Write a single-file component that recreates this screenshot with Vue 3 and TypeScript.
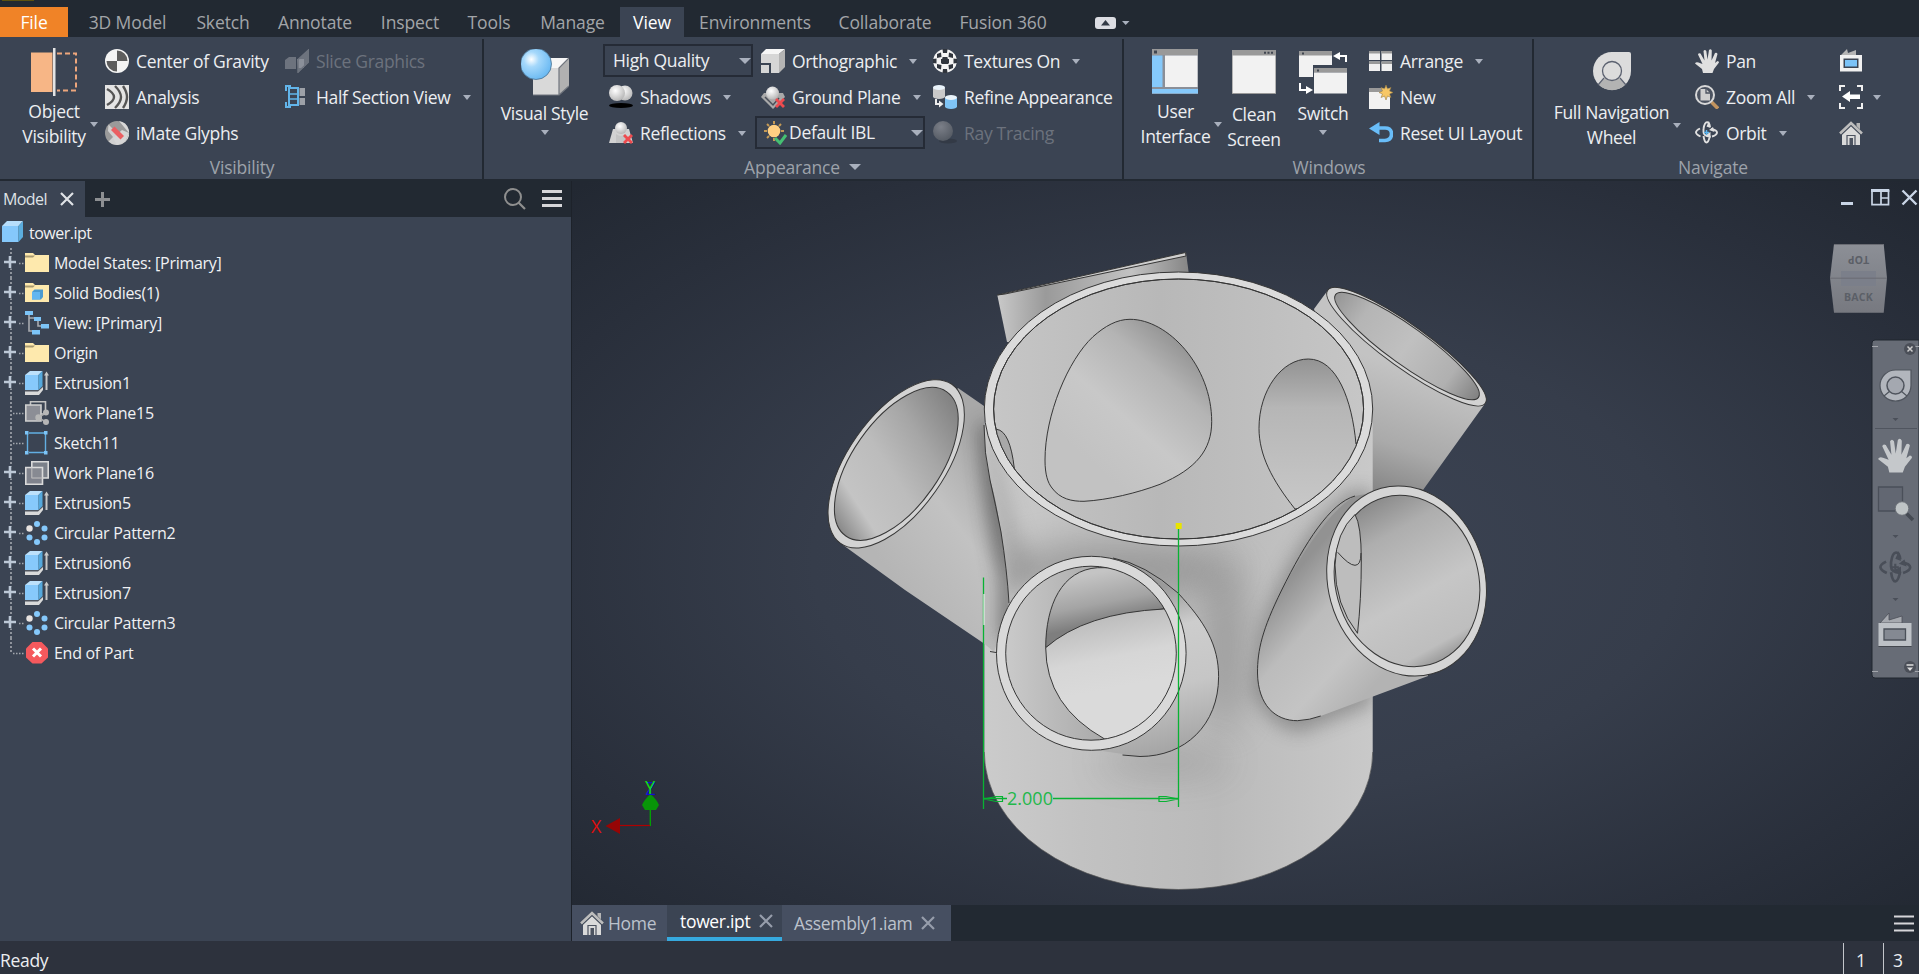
<script setup lang="ts">
interface Cmd { icon: string; label: string; caret?: boolean; off?: boolean }
interface Node { icon: string; label: string; plus: boolean }

const tabs: { label: string; width: number }[] = [
  { label: '3D Model', width: 111 },
  { label: 'Sketch', width: 80 },
  { label: 'Annotate', width: 104 },
  { label: 'Inspect', width: 86 },
  { label: 'Tools', width: 72 },
  { label: 'Manage', width: 95 },
  { label: 'View', width: 64 },
  { label: 'Environments', width: 142 },
  { label: 'Collaborate', width: 118 },
  { label: 'Fusion 360', width: 118 },
]

const visibilityA: Cmd[] = [
  { icon: 'gravity', label: 'Center of Gravity' },
  { icon: 'analysis', label: 'Analysis' },
  { icon: 'imate', label: 'iMate Glyphs' },
]
const visibilityB: Cmd[] = [
  { icon: 'slice', label: 'Slice Graphics', off: true },
  { icon: 'section', label: 'Half Section View', caret: true },
]
const shading: Cmd[] = [
  { icon: 'shadows', label: 'Shadows', caret: true },
  { icon: 'reflect', label: 'Reflections', caret: true },
]
const projection: Cmd[] = [
  { icon: 'ortho', label: 'Orthographic', caret: true },
  { icon: 'ground', label: 'Ground Plane', caret: true },
]
const textures: Cmd[] = [
  { icon: 'texture', label: 'Textures On', caret: true },
  { icon: 'refine', label: 'Refine Appearance' },
  { icon: 'ray', label: 'Ray Tracing', off: true },
]
const windowsCmds: Cmd[] = [
  { icon: 'arrange', label: 'Arrange', caret: true },
  { icon: 'new', label: 'New' },
  { icon: 'reset', label: 'Reset UI Layout' },
]
const navCmds: Cmd[] = [
  { icon: 'hand', label: 'Pan' },
  { icon: 'zoomall', label: 'Zoom All', caret: true },
  { icon: 'orbit', label: 'Orbit', caret: true },
]
const navIcons: Cmd[] = [
  { icon: 'camera', label: '' },
  { icon: 'previous', label: '', caret: true },
  { icon: 'home', label: '' },
]

const nodes: Node[] = [
  { icon: 'folder', label: 'Model States: [Primary]', plus: true },
  { icon: 'bodies', label: 'Solid Bodies(1)', plus: true },
  { icon: 'views', label: 'View: [Primary]', plus: true },
  { icon: 'folder', label: 'Origin', plus: true },
  { icon: 'extrude', label: 'Extrusion1', plus: true },
  { icon: 'planeshare', label: 'Work Plane15', plus: false },
  { icon: 'sketch', label: 'Sketch11', plus: false },
  { icon: 'plane', label: 'Work Plane16', plus: true },
  { icon: 'extrude', label: 'Extrusion5', plus: true },
  { icon: 'pattern', label: 'Circular Pattern2', plus: true },
  { icon: 'extrude', label: 'Extrusion6', plus: true },
  { icon: 'extrude', label: 'Extrusion7', plus: true },
  { icon: 'pattern', label: 'Circular Pattern3', plus: true },
  { icon: 'end', label: 'End of Part', plus: false },
]
</script>

<template>
  <div class="app">
    <svg class="defs" width="0" height="0" aria-hidden="true">
      <defs>
        <radialGradient id="gBlue" cx=".35" cy=".35" r=".7"><stop offset="0" stop-color="#fff" /><stop offset=".35" stop-color="#a5d8fb" /><stop offset="1" stop-color="#68b8f2" /></radialGradient>
        <radialGradient id="gBall" cx=".4" cy=".35" r=".7"><stop offset="0" stop-color="#fff" /><stop offset="1" stop-color="#b4b4b4" /></radialGradient>
        <radialGradient id="gDim" cx=".4" cy=".3" r=".8"><stop offset="0" stop-color="#7b7f88" /><stop offset="1" stop-color="#50565f" /></radialGradient>
      </defs>
      <symbol id="gravity" viewBox="0 0 24 24"><circle cx="12" cy="12" r="12" fill="#f4f4f4" /><path d="M12 12V1.5A10.500 10.500 0 0 1 22.500 12ZM12 12V22.500A10.500 10.500 0 0 1 1.500 12Z" fill="#5e5e5e" /></symbol>
      <symbol id="analysis" viewBox="0 0 24 24"><path d="M0 0H24V24H0Z" fill="#e4e4e4" /><path d="M2 4Q9 8 9 12T2 20M10 1Q16 7 16 12T10 23M18 1Q22 7 22 12T18 23" fill="none" stroke="#555" stroke-width="2.400" /></symbol>
      <symbol id="imate" viewBox="0 0 24 24"><circle cx="12" cy="12" r="12" fill="#9a9a9a" /><path d="M3.500 3.500 20.500 20.500A12 12 0 0 1 3.500 20.500L8 16 3 10Z" fill="#d0d0d0" /><path d="M14 0A12 12 0 0 1 20.500 20.500L24 12Z" fill="#d8d8d8" /><path d="M20.500 20.500 24 12 17 9 8 17 12 24Z" fill="#d6d6d6" /><path d="M9.500 5.500 19 15 15.500 18.500 6 9Z" fill="#ea5f62" /></symbol>
      <symbol id="slice" viewBox="0 0 24 24"><path d="M0 11 4 8H11V20H0ZM17 7 24 0V13L13 24V11Z" fill="#6d737e" /><path d="M12 10H19V19H13Z" fill="#8b909a" /><path d="M13 10.500 23.500 1V13L13 23Z" fill="none" stroke="#6d737e" stroke-width="1.500" /></symbol>
      <symbol id="section" viewBox="0 0 24 24"><path d="M1 6V1H6M1 17V22H6M4 3H13V20H4Z" fill="none" stroke="#62b5ea" stroke-width="2" /><path d="M4 9H13M4 14H13" stroke="#62b5ea" stroke-width="1.500" /><path d="M14.500 3H20V11H14.500ZM14.500 13H20V20H14.500Z" fill="#9da1a8" /></symbol>
      <symbol id="shadows" viewBox="0 0 24 24"><circle cx="16" cy="8" r="7.500" fill="url(#gBall)" /><circle cx="8" cy="8" r="8" fill="url(#gBall)" /><ellipse cx="12" cy="20.500" rx="12" ry="2.500" fill="#000" /></symbol>
      <symbol id="redx" viewBox="0 0 10 10"><path d="M0 2 2 0 5 3 8 0 10 2 7 5 10 8 8 10 5 7 2 10 0 8 3 5Z" fill="#ee4b4f" /></symbol>
      <symbol id="reflect" viewBox="0 0 24 24"><path d="M4 8H20L24 22H0Z" fill="#d2d2d2" /><circle cx="12" cy="7" r="6" fill="url(#gBall)" /><path d="M7 13Q12 17 17 13V22H7Z" fill="#c4c4c4" /><use href="#redx" x="14" y="13" width="10" height="10" /></symbol>
      <symbol id="ortho" viewBox="0 0 24 24"><path d="M0 5 5 0H24L18 5Z" fill="#f6f6f6" /><path d="M0 5H18V24H0Z" fill="#d6d6d6" /><path d="M18 5 24 0V18L18 24Z" fill="#b4b4b4" /><path d="M0 15H9V24" fill="none" stroke="#3b4453" stroke-width="2" /></symbol>
      <symbol id="ground" viewBox="0 0 24 24"><path d="M0 12 3 8 22 8 24 12 12 24Z" fill="#a9a9a9" /><path d="M4 12 12 20 18 13" fill="none" stroke="#4a4f58" stroke-width="1.500" /><circle cx="11.500" cy="8" r="6.500" fill="url(#gBall)" /><use href="#redx" x="14" y="13" width="10" height="10" /></symbol>
      <symbol id="ibl" viewBox="0 0 24 24"><path d="M11 0V3M11 17V20M1 10H4M18 10H21M4 3 6 5M4 17 6 15M18 3 16 5" stroke="#c59a55" stroke-width="2" /><circle cx="11" cy="10" r="6.300" fill="#ffd083" /><path d="M12 17 17 22 23 14" fill="none" stroke="#45c073" stroke-width="3" /></symbol>
      <symbol id="texture" viewBox="0 0 24 24"><circle cx="12" cy="12" r="11.800" fill="#f4f4f4" /><path d="M9.500 0H14.500L14 4H10ZM4 5 8 3.500 8.500 8 4 9ZM16 3.500 20 5V9L15.500 8ZM0 10 3.500 9.500V14.500L0 14ZM9.500 8H14.500V10H9.500ZM8 10H9.500V14.500H8ZM14.500 10H16V14.500H14.500ZM20.500 9.500 24 10V14L20.500 14.500ZM9 9.500H15V15H9ZM4 15 8.500 16 8 20.500 4 19ZM15.500 16 20 15V19L16 20.500ZM10 20H14L14.500 24H9.500Z" fill="#30353d" /></symbol>
      <symbol id="cyl" viewBox="0 0 12 14"><path d="M0 2.500V11.500A6 2.500 0 0 0 12 11.500V2.500Z" fill="currentColor" /><ellipse cx="6" cy="2.500" rx="6" ry="2.500" fill="#e9f3fa" /></symbol>
      <symbol id="refine" viewBox="0 0 24 24"><use href="#cyl" width="12" height="14" color="#c9c9c9" /><use href="#cyl" x="12" y="10" width="12" height="14" color="#7fc4f6" /><path d="M3 14V19H6" fill="none" stroke="#eee" stroke-width="2" /><path d="M6 15.500 10.500 19 6 22.500Z" fill="#eee" /></symbol>
      <symbol id="ray" viewBox="0 0 24 24"><ellipse cx="15" cy="20" rx="9" ry="2.500" fill="#333a46" /><circle cx="10" cy="10" r="10" fill="url(#gDim)" /></symbol>
      <symbol id="arrange" viewBox="0 0 24 24"><path d="M0 2H11V11H0ZM12.500 2H23V11H12.500ZM0 12.500H11V22H0ZM12.500 12.500H23V22H12.500Z" fill="#f0f0f0" /><path d="M0 2H11V4.500H0ZM12.500 2H23V4.500H12.500ZM0 12.500H11V15H0ZM12.500 12.500H23V15H12.500Z" fill="#999" /></symbol>
      <symbol id="new" viewBox="0 0 24 24"><path d="M0 3H21V24H0Z" fill="#f2f2f2" /><path d="M0 3H21V7H0Z" fill="#999" /><path d="M17 0 18.500 4 22 2.500 20.500 6 24 7.500 20.500 9 22 12.500 18.500 11 17 15 15.500 11 12 12.500 13.500 9 10 7.500 13.500 6 12 2.500 15.500 4Z" fill="#f7c765" stroke="#9c7f45" stroke-width=".6" /></symbol>
      <symbol id="reset" viewBox="0 0 24 24"><path d="M8 7H16Q22.500 7 22.500 13T16 19.500H10" fill="none" stroke="#69bdf8" stroke-width="3.600" /><path d="M0 7.500 10.500 1V14Z" fill="#69bdf8" /></symbol>
      <symbol id="hand" viewBox="0 0 24 24"><path d="M8 24 7 20 0 14.500Q1 12.500 3.500 13.500L7.500 15 3 5.500Q3.500 3.500 5.500 4.500L9.500 11.500 8.500 2Q9.800-.2 11.300 2L12.500 10.500 14 1Q15.700-.8 16.800 1.500L16.500 11.500 20 4Q22 3.200 22.500 5L20 14 22.500 12Q24 12 24 13.500L19 20 17.500 24Z" fill="currentColor" /></symbol>
      <symbol id="zoomall" viewBox="0 0 24 24"><path d="M16.500 17 23 23.500" stroke="#c1935f" stroke-width="3.600" /><circle cx="10" cy="10" r="9" fill="#4c5360" stroke="#d8d8d8" stroke-width="2" /><path d="M5.500 4H11L15 8V15.500H5.500Z" fill="#cfcfcf" /><path d="M11 4V8H15" fill="none" stroke="#4c5360" stroke-width="1.300" /></symbol>
      <symbol id="orbit" viewBox="0 0 24 24"><path d="M8.500 8Q9.500 1.200 12 1.200T15 6M8.500 15Q9.500 21.500 11.500 21.500T15 14.500M5 7.500Q.8 9.500 1 11.500T5.500 15.500M16 8Q22 9 22 11.500T17 15.500M15 15.500Q8.500 15 8.500 11V8" fill="none" stroke="currentColor" stroke-width="1.900" /><path d="M10 14 15.500 11V17ZM14 0 15.500 7 11.500 5.500ZM18 6 14 9 19.500 11Z" fill="currentColor" /><path d="M11.500 9V14M9 11.500H14" stroke="var(--plus, #59b4ef)" stroke-width="1.500" /></symbol>
      <symbol id="camera" viewBox="0 0 24 24"><path d="M2 6 8 0 9 4 17 1V6Z" fill="#b5b5b5" /><path d="M1 6H23V22.500H1Z" fill="#f1f1f1" /><path d="M4.500 9.500H19.500V19H4.500Z" fill="#3b4453" /><path d="M6 11H18V17.500H6Z" fill="#7bc3f8" /></symbol>
      <symbol id="previous" viewBox="0 0 24 24"><path d="M1 6V1H6M18 1H23V6M23 18V23H18M6 23H1V18" fill="none" stroke="#f0f0f0" stroke-width="2" /><path d="M3 11.500 11 6V9.500H21V14H11V17Z" fill="#fff" /></symbol>
      <symbol id="home" viewBox="0 0 24 24"><path d="M17.500 2H21V9L17.500 6Z" fill="#b6b6b6" /><path d="M3 12 12 4 21 12V24H3Z" fill="#dadada" /><path d="M1 13 12 2.500 23 13" fill="none" stroke="#3b4453" stroke-width="4" /><path d="M1 12.500 12 2 23 12.500" fill="none" stroke="#bdbdbd" stroke-width="2.600" /><path d="M8 24V14.500H16V24" fill="none" stroke="#4c5360" stroke-width="1.200" /><path d="M10.500 24V17H14V24ZM11 20H12" fill="#4c5360" /></symbol>
      <symbol id="objvis" viewBox="0 0 48 48"><path d="M0 4.500H21.500V44H0Z" fill="#f7b686" /><path d="M22 0H24.500V48H22Z" fill="#e4e4e4" /><path d="M26 5.500H45V42.500H26" fill="none" stroke="#eda67c" stroke-width="2" stroke-dasharray="5 3" /></symbol>
      <symbol id="vstyle" viewBox="0 0 48 48"><path d="M12 20 24 9H48L38 20Z" fill="#f6f6f6" /><path d="M12 19H38V46H12Z" fill="#d9d9d9" /><path d="M38 19 48 9V37L38 46Z" fill="#b1b1b1" /><path d="M12 46H38V19L48 9M38 46 48 37" fill="none" stroke="#70757e" stroke-width="1.200" /><circle cx="15" cy="15" r="15.500" fill="url(#gBlue)" stroke="#4d7291" stroke-width=".8" /></symbol>
      <symbol id="userui" viewBox="0 0 46 46"><path d="M0 0H46V45H0Z" fill="#8a8f98" /><path d="M0 0H46V6H0Z" fill="#999" /><path d="M2 1.500H5V4.500H2Z" fill="#404650" /><path d="M0 6.500H10.500V38H0ZM0 40H46V44.500H0Z" fill="#85c9fb" /><path d="M13 6.500H45.500V38H13Z" fill="#f2f2f2" /></symbol>
      <symbol id="clean" viewBox="0 0 44 44"><path d="M0 0H44V44H0Z" fill="#999" /><path d="M.7 5.500H43.300V43H.7Z" fill="#f2f2f2" /><path d="M32 1.800H34V3.800H32ZM35.500 1.800H37.500V3.800H35.500ZM39 1.800H41V3.800H39Z" fill="#404650" /></symbol>
      <symbol id="switch" viewBox="0 0 48 44"><path d="M0 0H33V14H14V26H0Z" fill="#f2f2f2" /><path d="M0 0H33V4.500H0ZM15 17H48V21.500H15Z" fill="#999" /><path d="M15 21.500H48V42.500H15Z" fill="#f2f2f2" /><path d="M3 1.500H5V3.500H3ZM18 18.500H20V20.500H18Z" fill="#404650" /><path d="M47 11V5H41M1 32V39H8" fill="none" stroke="#fff" stroke-width="2" /><path d="M34 5 41 1V9ZM14 39 7 35V43Z" fill="#fff" /></symbol>
      <symbol id="wheel" viewBox="0 0 40 40"><path d="M1 20A19 19 0 0 1 20 1H37Q39 1 39 3V20A19 19 0 0 1 1 20Z" fill="#dcdcdc" /><path d="M20 20 6.500 33.500A19 19 0 0 0 33.500 33.500Z" fill="#b3b3b3" /><path d="M6 34 12 27M34 34 28 27" stroke="#5b6170" stroke-width="1.200" /><circle cx="20" cy="20" r="9.500" fill="#dcdcdc" stroke="#5b6170" stroke-width="1.300" /></symbol>
      <symbol id="folder" viewBox="0 0 24 24"><path d="M0 2H8L10 4H24V21H0Z" fill="#fee9ad" /><path d="M0 4.500H10L8 6.500H0Z" fill="#a99b72" /></symbol>
      <symbol id="bodies" viewBox="0 0 24 24"><use href="#folder" /><path d="M7 11 9.500 8.500H18V16L16 18.500H7Z" fill="#4b9bd1" /><path d="M7 11H15V18.500H7Z" fill="#62b6f0" /></symbol>
      <symbol id="views" viewBox="0 0 24 24"><path d="M4 4V20H8M4 7H9M13 10V15H17" fill="none" stroke="#a8abb0" stroke-width="1.600" /><path d="M0 0H8V4H0ZM9 6H16V10H9ZM16 13H24V17.500H16ZM7 19H15V23.500H7Z" fill="#7cc4f7" /></symbol>
      <symbol id="cube" viewBox="0 0 24 24"><path d="M1 6 6 1H22L17.500 6Z" fill="#b7defb" /><path d="M1 6H17.500V22H1Z" fill="#85c8fb" /><path d="M17.500 6 22 1V17L17.500 22Z" fill="#5badde" /></symbol>
      <symbol id="extrude" viewBox="0 0 24 24"><path d="M0 20 13 19.500 18 15V19L14 24H0Z" fill="#d9d9d9" /><path d="M0 20.500H13L18 16V14H0Z" fill="#4e545e" /><path d="M0 4 5 0H17.500L13.500 4Z" fill="#bde1fb" /><path d="M0 4H13.500V19H0Z" fill="#87c9fb" /><path d="M13.500 4 17.500 0V15L13.500 19Z" fill="#55a8dc" /><path d="M21.500 4V19" stroke="#c9c9c9" stroke-width="2" /><path d="M19 4.500 21.500 .5 24 4.500Z" fill="#c9c9c9" /></symbol>
      <symbol id="plane" viewBox="0 0 24 24"><path d="M6.800 .8H23.200V17H6.800Z" fill="#7b8089" stroke="#dadada" stroke-width="1.600" /><path d="M.8 6.500H17.500V23.200H.8Z" fill="#888b94" fill-opacity=".9" stroke="#dadada" stroke-width="1.600" /><path d="M6.800 6.500V17H17.500" fill="none" stroke="#b9b9b9" /></symbol>
      <symbol id="planeshare" viewBox="0 0 24 24"><path d="M5.500 .8H20.500V13H5.500Z" fill="none" stroke="#c4c4c4" stroke-width="1.600" /><path d="M.8 4H16V20H.8Z" fill="#8c8e96" stroke="#cfcfcf" stroke-width="1.600" /><path d="M21 12 13 16.500 21 21" fill="none" stroke="#aaa" stroke-width="1.600" /><circle cx="21" cy="11.500" r="3" fill="#b6b6b6" /><circle cx="13.500" cy="16.500" r="3.200" fill="#b6b6b6" /><circle cx="21" cy="21" r="3" fill="#b6b6b6" /></symbol>
      <symbol id="sketch" viewBox="0 0 24 24"><path d="M2.500 3V21M20.500 3V21M4 2H19M4 21.500H19" fill="none" stroke="#62aee2" stroke-width="1.400" /><path d="M0 0H3.500V3.500H0ZM19 0H22.500V3.500H19ZM0 20H3.500V23.500H0ZM19 20H22.500V23.500H19Z" fill="#7cc4f7" /></symbol>
      <symbol id="pattern" viewBox="0 0 24 24"><g fill="#85c8fb"><circle cx="12" cy="3" r="3" /><circle cx="19.500" cy="7.500" r="3" /><circle cx="19.500" cy="16.500" r="3" /><circle cx="12" cy="21" r="3" /><circle cx="4.500" cy="16.500" r="3" /></g><circle cx="4.500" cy="7.500" r="3.200" fill="#e8e2e0" /></symbol>
      <symbol id="end" viewBox="0 0 24 24"><path d="M7.500 1H16.500L23 7.500V16.500L16.500 22.500H7.500L1 16.500V7.500Z" fill="#f5595d" /><path d="M8 7.500 16 15.500M16 7.500 8 15.500" stroke="#fff" stroke-width="3" /></symbol>
      <symbol id="cross" viewBox="0 0 14 14"><path d="M1 1 13 13M13 1 1 13" stroke="currentColor" stroke-width="2.200" fill="none" /></symbol>
    </svg>

    <header class="tabs">
      <span class="qat"></span>
      <div class="tab file">File</div>
      <div v-for="t in tabs" :key="t.label" class="tab" :class="{ on: t.label === 'View' }" :style="{ width: t.width + 'px' }">{{ t.label }}</div>
      <svg class="toggle" width="36" height="16" viewBox="0 0 36 16"><rect x="0" y="2" width="21" height="12" rx="3" fill="#dcdde3" /><path d="M6 10.500 10.500 5 15 10.500Z" fill="#333a46" /><path d="M27 6H34.500L30.700 10Z" fill="#a9b0bd" /></svg>
    </header>

    <section class="ribbon">
      <div class="panel p-vis">
        <div class="body">
          <div class="large objv">
            <svg class="i48"><use href="#objvis" /></svg>
            <div class="lbl"><span>Object<br />Visibility</span><i class="car"></i></div>
          </div>
          <div class="col w180">
            <div v-for="c in visibilityA" :key="c.label" class="cmd"><svg><use :href="'#' + c.icon" /></svg><span>{{ c.label }}</span></div>
          </div>
          <div class="col">
            <div v-for="c in visibilityB" :key="c.label" class="cmd" :class="{ off: c.off }"><svg><use :href="'#' + c.icon" /></svg><span>{{ c.label }}</span><i v-if="c.caret" class="car"></i></div>
          </div>
        </div>
        <div class="title t-vis">Visibility</div>
      </div>

      <div class="panel p-app">
        <div class="body">
          <div class="large vst">
            <svg class="i48"><use href="#vstyle" /></svg>
            <span class="one">Visual Style</span><i class="car"></i>
          </div>
          <div class="col c-shade">
            <div class="combo quality"><span>High Quality</span><i class="car big"></i></div>
            <div v-for="c in shading" :key="c.label" class="cmd"><svg><use :href="'#' + c.icon" /></svg><span>{{ c.label }}</span><i class="car"></i></div>
          </div>
          <div class="col c-proj">
            <div v-for="c in projection" :key="c.label" class="cmd"><svg><use :href="'#' + c.icon" /></svg><span>{{ c.label }}</span><i class="car"></i></div>
            <div class="combo ibl"><svg><use href="#ibl" /></svg><span>Default IBL</span><i class="car big"></i></div>
          </div>
          <div class="col">
            <div v-for="c in textures" :key="c.label" class="cmd" :class="{ off: c.off }"><svg><use :href="'#' + c.icon" /></svg><span>{{ c.label }}</span><i v-if="c.caret" class="car"></i></div>
          </div>
        </div>
        <div class="title t-app">Appearance<i class="car big"></i></div>
      </div>

      <div class="panel p-win">
        <div class="body">
          <div class="large ui">
            <svg class="i46"><use href="#userui" /></svg>
            <div class="lbl"><span>User<br />Interface</span><i class="car"></i></div>
          </div>
          <div class="large cs">
            <svg class="i44"><use href="#clean" /></svg>
            <div class="lbl"><span>Clean<br />Screen</span></div>
          </div>
          <div class="large sw">
            <svg class="i48s"><use href="#switch" /></svg>
            <span class="one">Switch</span><i class="car"></i>
          </div>
          <div class="col">
            <div v-for="c in windowsCmds" :key="c.label" class="cmd"><svg><use :href="'#' + c.icon" /></svg><span>{{ c.label }}</span><i v-if="c.caret" class="car"></i></div>
          </div>
        </div>
        <div class="title t-win">Windows</div>
      </div>

      <div class="panel p-nav">
        <div class="body">
          <div class="large nw">
            <svg class="i40"><use href="#wheel" /></svg>
            <div class="lbl"><span>Full Navigation<br />Wheel</span><i class="car"></i></div>
          </div>
          <div class="col c-nav">
            <div v-for="c in navCmds" :key="c.label" class="cmd"><svg><use :href="'#' + c.icon" /></svg><span>{{ c.label }}</span><i v-if="c.caret" class="car"></i></div>
          </div>
          <div class="col">
            <div v-for="c in navIcons" :key="c.icon" class="cmd bare"><svg><use :href="'#' + c.icon" /></svg><i v-if="c.caret" class="car"></i></div>
          </div>
        </div>
        <div class="title t-nav">Navigate</div>
      </div>
    </section>

    <main class="work">
      <aside class="browser">
        <div class="bhead">
          <div class="btab"><span>Model</span><svg width="14" height="14"><use href="#cross" /></svg></div>
          <svg class="add" width="15" height="15" viewBox="0 0 15 15"><path d="M0 7.500H15M7.500 0V15" stroke="#8d8f92" stroke-width="3" /></svg>
          <svg class="find" width="22" height="22" viewBox="0 0 22 22"><circle cx="9" cy="9" r="8" fill="none" stroke="#8f8f8f" stroke-width="2" /><path d="M14.500 14.500 21 21" stroke="#8f8f8f" stroke-width="2.200" /></svg>
          <svg class="menu" width="20" height="17" viewBox="0 0 20 17"><path d="M0 1.500H20M0 8.500H20M0 15.500H20" stroke="#d6d6d9" stroke-width="3" /></svg>
        </div>
        <div class="tree">
          <div class="root"><svg><use href="#cube" /></svg><span>tower.ipt</span></div>
          <div v-for="n in nodes" :key="n.label" class="node">
            <svg class="wire" width="25" height="30" viewBox="0 0 25 30">
              <path :d="n.icon === 'end' ? 'M11 0V15' : 'M11 0V30'" stroke="#a3a7ae" stroke-width="1.600" stroke-dasharray="2 2" />
              <path :d="n.plus ? 'M19 15.500H25' : 'M13 15.500H25'" stroke="#a3a7ae" stroke-width="1.300" stroke-dasharray="1.500 1.500" />
              <path v-if="n.plus" d="M4 14.500H16M10 8.500V20.500" stroke="#3b4453" stroke-width="6" />
              <path v-if="n.plus" d="M4 14H16M10 8V20" stroke="#bcc8d6" stroke-width="2.600" />
            </svg>
            <svg class="ic"><use :href="'#' + n.icon" /></svg><span>{{ n.label }}</span>
          </div>
        </div>
      </aside>

      <section class="stage">
        <svg class="scene" width="1347" height="724" viewBox="572 181 1347 724">
          <defs>
            <radialGradient id="bg" gradientUnits="userSpaceOnUse" cx="0" cy="0" r="1" gradientTransform="translate(1245 560) scale(960 520)"><stop offset="0" stop-color="#3d4555" /><stop offset=".45" stop-color="#363d4b" /><stop offset=".8" stop-color="#292f3b" /><stop offset="1" stop-color="#222832" /></radialGradient>
            <linearGradient id="body" gradientUnits="userSpaceOnUse" x1="984" y1="0" x2="1373" y2="0"><stop offset="0" stop-color="#cbcbcb" /><stop offset=".25" stop-color="#c2c2c2" /><stop offset=".6" stop-color="#bababa" /><stop offset="1" stop-color="#c9c9c9" /></linearGradient>
            <linearGradient id="inner" x1="0" y1="0" x2="1" y2="0"><stop offset="0" stop-color="#c6c6c6" /><stop offset=".45" stop-color="#b8b8b8" /><stop offset="1" stop-color="#c6c6c6" /></linearGradient>
            <linearGradient id="tubeL" gradientUnits="userSpaceOnUse" x1="880" y1="560" x2="1000" y2="470"><stop offset="0" stop-color="#b5b5b5" /><stop offset=".55" stop-color="#c2c2c2" /><stop offset="1" stop-color="#a8a8a8" /></linearGradient>
            <linearGradient id="tubeLin" x1="1" y1=".6" x2="0" y2=".4"><stop offset="0" stop-color="#808080" /><stop offset=".3" stop-color="#a6a6a6" /><stop offset=".55" stop-color="#bcbcbc" /><stop offset=".82" stop-color="#c4c4c4" /><stop offset="1" stop-color="#868686" /></linearGradient>
            <linearGradient id="tubeR" gradientUnits="userSpaceOnUse" x1="1410" y1="370" x2="1370" y2="490"><stop offset="0" stop-color="#c3c3c3" /><stop offset=".6" stop-color="#aaa" /><stop offset="1" stop-color="#858585" /></linearGradient>
            <linearGradient id="tubeRin" x1="0" y1="0" x2="1" y2="0"><stop offset="0" stop-color="#959595" /><stop offset=".2" stop-color="#b5b5b5" /><stop offset=".5" stop-color="#c0c0c0" /><stop offset=".8" stop-color="#b0b0b0" /><stop offset="1" stop-color="#808080" /></linearGradient>
            <linearGradient id="tubeBL" gradientUnits="userSpaceOnUse" x1="998" y1="0" x2="1189" y2="0"><stop offset="0" stop-color="#c8c8c8" /><stop offset=".25" stop-color="#9a9a9a" /><stop offset=".7" stop-color="#c2c2c2" /><stop offset="1" stop-color="#858585" /></linearGradient>
            <linearGradient id="tubeFR" gradientUnits="userSpaceOnUse" x1="1270" y1="600" x2="1370" y2="690"><stop offset="0" stop-color="#929292" /><stop offset=".35" stop-color="#bcbcbc" /><stop offset=".7" stop-color="#c4c4c4" /><stop offset="1" stop-color="#b3b3b3" /></linearGradient>
            <linearGradient id="tubeFRin" x1="0" y1=".6" x2="1" y2=".4"><stop offset="0" stop-color="#8a8a8a" /><stop offset=".22" stop-color="#aeaeae" /><stop offset=".6" stop-color="#c6c6c6" /><stop offset=".9" stop-color="#bebebe" /><stop offset="1" stop-color="#979797" /></linearGradient>
            <linearGradient id="tubeF" gradientUnits="userSpaceOnUse" x1="1150" y1="590" x2="1190" y2="750"><stop offset="0" stop-color="#9a9a9a" /><stop offset=".25" stop-color="#cdcdcd" /><stop offset=".6" stop-color="#c6c6c6" /><stop offset="1" stop-color="#a3a3a3" /></linearGradient>
            <linearGradient id="tubeFin" gradientUnits="userSpaceOnUse" x1="1005" y1="0" x2="1100" y2="0"><stop offset="0" stop-color="#cacaca" /><stop offset="1" stop-color="#ababab" /></linearGradient>
            <linearGradient id="fLow" gradientUnits="userSpaceOnUse" x1="1090" y1="615" x2="1105" y2="690"><stop offset="0" stop-color="#bababa" /><stop offset=".6" stop-color="#d6d6d6" /><stop offset="1" stop-color="#dadada" /></linearGradient>
            <linearGradient id="fUp" gradientUnits="userSpaceOnUse" x1="1110" y1="570" x2="1120" y2="620"><stop offset="0" stop-color="#c4c4c4" /><stop offset=".6" stop-color="#a4a4a4" /><stop offset="1" stop-color="#7e7e7e" /></linearGradient>
            <linearGradient id="hole1" gradientUnits="userSpaceOnUse" x1="1205" y1="350" x2="1100" y2="470"><stop offset="0" stop-color="#8c8c8c" /><stop offset=".3" stop-color="#b4b4b4" /><stop offset=".65" stop-color="#c8c8c8" /><stop offset="1" stop-color="#c2c2c2" /></linearGradient>
            <linearGradient id="hole2" gradientUnits="userSpaceOnUse" x1="0" y1="358" x2="0" y2="500"><stop offset="0" stop-color="#929292" /><stop offset=".35" stop-color="#b6b6b6" /><stop offset="1" stop-color="#c6c6c6" /></linearGradient>
            <linearGradient id="cubeF" x1="0" y1="0" x2="0" y2="1"><stop offset="0" stop-color="#8c8f96" /><stop offset="1" stop-color="#777980" /></linearGradient>
            <filter id="soft" filterUnits="userSpaceOnUse" x="800" y="350" width="750" height="600"><feGaussianBlur stdDeviation="18" /></filter>
            <filter id="soft2" filterUnits="userSpaceOnUse" x="800" y="350" width="750" height="600"><feGaussianBlur stdDeviation="9" /></filter>
            <clipPath id="bodyClip"><path d="M984.300 409A194.200 137 0 0 1 1372.700 409V752A194.200 137.500 0 0 1 984.300 752Z" /></clipPath>
            <clipPath id="innerClip"><ellipse cx="1178.600" cy="409" rx="185" ry="130" /></clipPath>
            <clipPath id="frontClip"><ellipse cx="1091" cy="653.200" rx="85.300" ry="87" /></clipPath>
            <clipPath id="leftClip"><path d="M843 545 905 590 984 643.500 994 652 1009 603Q1007 570 1001 532T990 480Q984 453 984 425V406L958 388Z" /></clipPath>
          </defs>
          <rect x="572" y="181" width="1347" height="724" fill="url(#bg)" />

          <g class="edge">
            <path d="M997.300 295 1186 252.500 1189 275 1100 340 1007 342Z" fill="url(#tubeBL)" stroke="none" />
            <path d="M997.300 295 1185.500 252.500 1186 256 1005 294Z" fill="#cfcfcf" />
            <path d="M1314 309 1328 290 1484 405 1423 490 1390 520H1320V330Z" fill="url(#tubeR)" stroke="none" />
            <ellipse cx="1406.500" cy="346.700" rx="97" ry="21.500" transform="rotate(35.700 1406.500 346.700)" fill="#d2d2d2" />
            <ellipse cx="1407" cy="346" rx="88" ry="19" transform="rotate(35.700 1407 346)" fill="url(#tubeRin)" />

            <path d="M984.300 409V752A194.200 137.500 0 0 0 1372.700 752V409Z" fill="url(#body)" stroke="none" />
            <path d="M984.300 752A194.200 137.500 0 0 0 1372.700 752" fill="none" stroke="#555" stroke-width=".7" />
            <g clip-path="url(#bodyClip)" stroke="none" fill="#6a6a6a">
              <ellipse cx="1115" cy="570" rx="115" ry="26" opacity=".45" filter="url(#soft)" />
              <ellipse cx="1226" cy="645" rx="18" ry="85" opacity=".42" filter="url(#soft)" />
              <ellipse cx="1165" cy="762" rx="65" ry="12" opacity=".35" filter="url(#soft)" />
              <path d="M1352 490Q1295 530 1260 630L1252 690Q1268 728 1300 733L1372 705V490Z" opacity=".55" filter="url(#soft2)" />
              <path d="M984 440Q990 500 1009 603L1035 570Q1005 500 996 440Z" opacity=".25" filter="url(#soft2)" />
            </g>

            <path d="M843 545 905 590 984 643.500 994 652 1009 610 1009 603Q1007 570 1001 532T990 480Q984 453 984 425V406L958 388Z" fill="url(#tubeL)" stroke="none" />
            <g clip-path="url(#leftClip)"><path d="M979 425Q982 500 1000 580L1000 640 1020 640 1012 520 990 420Z" fill="#4a4a4a" opacity=".65" filter="url(#soft2)" stroke="none" /></g>
            <path d="M984 425Q984 453 990 480T1001 532Q1007 570 1009 603M990 651.500 996 652.500" fill="none" />
            <ellipse cx="896.200" cy="463.800" rx="97.100" ry="48" transform="rotate(-55 896.200 463.800)" fill="#d3d3d3" />
            <ellipse cx="896.300" cy="463.900" rx="88" ry="43.600" transform="rotate(-55 896.300 463.900)" fill="url(#tubeLin)" />

            <ellipse cx="1178.500" cy="409" rx="194.200" ry="137" fill="#dbdbdb" />
            <ellipse cx="1178.600" cy="409" rx="185" ry="130" fill="url(#inner)" />
            <g clip-path="url(#innerClip)">
              <path d="M1130 319.300C1117 319.300 1105 326 1093 336.700C1068 360 1045 415 1045 460C1045 475 1048 483 1052 488C1060 499 1072 501.500 1084 501.300C1108 500 1137 493 1160 484.300C1196 469 1211.700 450 1211.700 421.700C1211.700 366 1168 319.300 1130 319.300Z" fill="url(#hole1)" />
              <path d="M1308.300 359C1282 359 1259 390 1259 428.300C1259 455 1272 480 1295 509L1370 500V444H1356C1352 400 1337 359 1308.300 359Z" fill="url(#hole2)" />
              <path d="M980 440 996.700 429.300Q1010 431 1014.300 468.300L1000 480Z" fill="#a8a8a8" />
            </g>
            <ellipse cx="1178.600" cy="409" rx="185" ry="130" fill="none" />

            <path d="M1398 488 1355 496Q1325 513 1281.700 590C1262 630 1257.500 650 1257.500 673C1258 705 1275 720.700 1297.500 720.700Q1310 720 1320.700 716L1428 676Z" fill="url(#tubeFR)" stroke="none" />
            <path d="M1355 496C1330 503 1305 543 1281.700 590C1262 630 1257.500 650 1257.500 673C1258 705 1275 720.700 1297.500 720.700Q1310 720 1320.700 716" fill="none" />
            <ellipse cx="1406.600" cy="581" rx="96.200" ry="78.500" transform="rotate(74.600 1406.600 581)" fill="#d5d5d5" />
            <ellipse cx="1407" cy="581" rx="86.700" ry="71.500" transform="rotate(74.600 1407 581)" fill="url(#tubeFRin)" />
            <path d="M1355 514.500Q1361.300 525 1361.300 560 1361.300 600 1357.500 633.300 1335 605 1335 565 1336 532 1355 514.500Z" fill="#bdbdbd" />
            <path d="M1337.700 552.300Q1349 565.300 1355 565.300T1361 553" fill="none" />

            <path d="M1097 557Q1135 561 1178 593C1205 622 1218.600 645 1218.600 676.700C1218.600 725 1185 756.500 1140 756.500L1095 750Z" fill="url(#tubeF)" stroke="none" />
            <path d="M1113 558Q1145 564 1178 593C1205 622 1218.600 645 1218.600 676.700C1218.600 725 1185 756.500 1140 756.500L1122.500 755" fill="none" />
            <ellipse cx="1091.300" cy="653.300" rx="94.800" ry="97" fill="#d9d9d9" />
            <g clip-path="url(#frontClip)">
              <rect x="1000" y="560" width="190" height="190" fill="url(#tubeFin)" stroke="none" />
              <path d="M1110 567.700 1097.500 567.700C1062 570 1045.700 605 1045.700 647.700Q1085 616 1163.600 609L1190 560Z" fill="url(#fUp)" />
              <path d="M1045.700 647.700Q1085 613 1163.600 609H1190V750L1104.600 739Q1046 706 1045.700 647.700Z" fill="url(#fLow)" />
            </g>
            <ellipse cx="1091" cy="653.200" rx="85.300" ry="87" fill="none" />
          </g>

          <path d="M983.500 577.500V809M1178.500 527V807M984 798.500H1007M1053 798.500H1178" stroke="#08b233" stroke-width="1.300" fill="none" />
          <path d="M984 594V625" stroke="#eee" stroke-width="1.200" />
          <path d="M984 799 996 796.500H1002.500V801.500H996ZM1178 799 1166 801.500H1159V796.500H1166Z" fill="none" stroke="#08b233" stroke-width="1.200" />
          <rect x="1175.700" y="523" width="6" height="6" fill="#e9e400" />
          <text x="1007" y="805" class="dim" textLength="46" lengthAdjust="spacingAndGlyphs">2.000</text>

          <path d="M650.300 826V808" stroke="#00a800" stroke-width="1.300" />
          <path d="M620 825.500H650" stroke="#b00000" stroke-width="1.200" />
          <path d="M650.500 794Q657 800 659 805L656 810H645L642 805Q644 800 650.500 794Z" fill="#089408" />
          <path d="M605.500 826 620 818V834Z" fill="#960505" />
          <text x="645.500" y="794.500" class="ax z">Z</text>
          <text x="645" y="794" class="ax y">Y</text>
          <text x="591" y="832.500" class="ax x">X</text>

          <path d="M1834 244H1883.700L1887 278 1883.700 312.700H1834L1830 278Z" fill="url(#cubeF)" />
          <path d="M1841 271H1876V286H1841Z" fill="#7b7f8a" />
          <path d="M1830 278.200H1887M1834 244.500H1883.700" stroke="#6a6c73" stroke-width="1" />
          <text x="1858.500" y="301" class="vc">BACK</text>
          <text x="1858.500" y="264" class="vc" transform="rotate(180 1858.500 260)">TOP</text>

          <g fill="none" stroke="#c9d5e6">
            <path d="M1841 203.500H1853" stroke-width="3" />
            <path d="M1872 190V204.700H1888.500V190M1881 192V204M1881 198H1888" stroke-width="1.700" />
            <path d="M1871 190.500H1889.300" stroke-width="3" />
            <path d="M1902.500 190.500 1916.500 204.500M1916.500 190.500 1902.500 204.500" stroke-width="2.400" />
          </g>

          <g>
            <path d="M1875 340H1919V678H1875Q1872 678 1872 675V343Q1872 340 1875 340Z" fill="#676c76" stroke="#20262f" stroke-width="1" />
            <path d="M1872 346.500H1878M1915 346.500H1919M1872 671.500H1878M1915 671.500H1919" stroke="#a2a5ab" stroke-width="1" />
            <path d="M1875 428.500H1917" stroke="#50555f" stroke-width="1.200" />
            <circle cx="1910" cy="349" r="6" fill="#4b4f58" /><path d="M1907.500 346.500 1912.500 351.500M1912.500 346.500 1907.500 351.500" stroke="#ccc" stroke-width="1.500" />
            <circle cx="1910" cy="667" r="6" fill="#4b4f58" /><path d="M1906.500 665H1913.500" stroke="#ddd" stroke-width="1.500" /><path d="M1907 667.500H1913L1910 671Z" fill="#ddd" />
            <path d="M1892.500 418H1898.500L1895.500 421ZM1892.500 535H1898.500L1895.500 538ZM1892.500 598H1898.500L1895.500 601Z" fill="#4a4f59" />
            <path d="M1880 385.500A15.500 15.500 0 0 1 1895.500 370H1911V385.500A15.500 15.500 0 0 1 1880 385.500Z" fill="#b2b6bd" stroke="#4f545d" stroke-width="1.200" />
            <path d="M1884 396 1890 391M1907 396 1901 391" stroke="#4f545d" stroke-width="1.200" />
            <circle cx="1895.500" cy="385.500" r="8.500" fill="#a4a8b0" stroke="#4f545d" stroke-width="1.500" />
            <svg x="1878" y="438" width="34" height="35" color="#c5c8cb"><use href="#hand" /></svg>
            <path d="M1878.500 487H1902.500V511H1878.500Z" fill="#626772" stroke="#4a4f59" stroke-width="1.300" />
            <path d="M1906 513 1913 520" stroke="#454a53" stroke-width="3.500" />
            <circle cx="1902" cy="508.500" r="6.800" fill="#bfc4c6" stroke="#6d7279" />
            <svg class="dull" x="1879" y="550" width="34" height="36" color="#494e58"><use href="#orbit" /></svg>
            <path d="M1880 623 1889 613V620L1902 616V623Z" fill="#a6a9af" stroke="#4b4f58" stroke-width=".8" />
            <path d="M1878.500 623H1911.500V646H1878.500Z" fill="#bdc1c6" />
            <path d="M1884 629H1905.500V640H1884Z" fill="#848992" stroke="#4b5059" stroke-width="1.300" />
            <path d="M1878.500 646.500H1911.500" stroke="#44484f" />
          </g>
        </svg>

        <nav class="docs">
          <div class="doc d-home"><svg width="24" height="24"><use href="#home" /></svg><span>Home</span></div>
          <div class="doc d-on"><span>tower.ipt</span><svg width="14" height="14"><use href="#cross" /></svg></div>
          <div class="doc d-asm"><span>Assembly1.iam</span><svg width="14" height="14"><use href="#cross" /></svg></div>
          <svg class="dmenu" width="20" height="17" viewBox="0 0 20 17"><path d="M0 1.500H20M0 8.500H20M0 15.500H20" stroke="#d6d6d9" stroke-width="2.200" /></svg>
        </nav>
      </section>
    </main>

    <footer class="status">
      <span class="ready">Ready</span>
      <span class="cell c1">1</span>
      <span class="cell c3">3</span>
    </footer>
  </div>
</template>

<style>
body { margin: 0; background: #222932; overflow: hidden; }
</style>

<style scoped>
.app { width: 1919px; height: 974px; display: flex; flex-direction: column; overflow: hidden; background: #222932; color: #eceef1; font-family: "Open Sans", "Noto Sans", sans-serif; font-size: 17.500px; letter-spacing: -.32px; white-space: nowrap; }
.defs { position: absolute; }
svg { flex: none; display: block; overflow: visible; }
.tabs { height: 37px; display: flex; align-items: flex-end; position: relative; letter-spacing: -.12px; }
.qat { position: absolute; left: 2px; top: 0; width: 32px; height: 1px; background: #5e520f; }
.tab { height: 30px; line-height: 31px; text-align: center; color: #a2a5a9; }
.tab.on { background: #3b4453; color: #fff; }
.tab.file { width: 68px; margin-right: 4px; background: #f08327; color: #fff; }
.toggle { margin: 0 0 6px 33px; }
.ribbon { height: 142px; display: flex; background: #3b4453; border-bottom: 2px solid #222932; }
.panel { height: 140px; margin-top: 2px; border-right: 2px solid #222932; box-sizing: border-box; }
.p-vis { width: 484px; }
.p-app { width: 640px; }
.p-win { width: 410px; }
.p-nav { width: 385px; border-right: 0; }
.body { display: flex; height: 112px; padding-top: 4px; box-sizing: border-box; }
.title { line-height: 28px; height: 28px; margin-top: 2px; color: #9da2aa; display: flex; justify-content: center; align-items: center; box-sizing: border-box; letter-spacing: -.2px; }
.t-vis { padding-left: 2px; }
.t-app { padding-right: 1px; gap: 9px; }
.t-win { padding-left: 2px; }
.t-nav { padding-right: 27px; }
.col { display: flex; flex-direction: column; }
.cmd { height: 36px; display: flex; align-items: center; }
.cmd svg { width: 24px; height: 24px; color: #e0e0e0; }
.cmd span { margin-left: 7px; }
.cmd.off span { color: #6c727d; }
.car { width: 0; height: 0; border: 4px solid transparent; border-top: 5px solid #a9b0bd; border-bottom: 0; margin-left: 12px; }
.car.big { border-width: 6px 6px 0; margin-left: 0; }
.w180 { width: 180px; }
.large { display: flex; flex-direction: column; align-items: center; box-sizing: border-box; padding-top: 5px; }
.large .lbl { display: flex; align-items: center; line-height: 25px; text-align: center; }
.large .lbl .car { margin-left: 4px; }
.large .one { line-height: 25px; }
.large > .car { margin: 4px 0 0; }
.i48 { width: 48px; height: 48px; }
.i46 { width: 46px; height: 46px; }
.i44 { width: 44px; height: 44px; }
.i48s { width: 48px; height: 44px; }
.i40 { width: 40px; height: 40px; }
.objv { width: 105px; padding-left: 13px; }
.objv .i48 { margin: 0 9px 3px 0; }
.objv .lbl { margin-left: 2px; }
.vst { width: 123px; padding-top: 6px; }
.vst .i48 { margin: 0 1px 4px 0; }
.vst .one { margin-right: 2px; }
.vst > .car { margin-right: 2px; }
.c-shade { width: 152px; margin-left: -4px; }
.c-shade .cmd { padding-left: 6px; }
.combo { box-sizing: border-box; height: 33px; border: 2px solid #252b36; display: flex; align-items: center; margin: 1px 0 2px; line-height: 27px; }
.combo .car { margin-left: auto; margin-right: 0; }
.quality { width: 150px; padding-left: 8px; }
.c-proj { width: 178px; }
.c-proj .cmd { padding-left: 6px; }
.ibl { width: 170px; padding-left: 6px; }
.ibl svg { width: 24px; height: 24px; }
.ibl span { margin-left: 2px; }
.ui { width: 102px; padding: 6px 0 0 7px; }
.ui .i46 { margin: 0 7px 4px 0; }
.ui .lbl { margin-left: 6px; }
.cs { width: 56px; padding-top: 7px; }
.cs .lbl { margin-top: 8px; }
.sw { width: 87px; padding: 8px 5px 0 0; }
.sw .one { margin-top: 6px; }
.nw { width: 161px; padding-top: 8px; }
.nw .i40 { margin: 0 6px 9px 0; }
.nw .lbl { margin-left: 6px; }
.c-nav { width: 144px; }
.cmd.bare .car { margin-left: 10px; }
.work { flex: 1; display: flex; min-height: 0; }
.browser { width: 571px; border-right: 1px solid #1d222a; background: #3b4453; display: flex; flex-direction: column; }
.bhead { height: 36px; background: #222932; display: flex; align-items: center; }
.btab { width: 85px; height: 36px; box-sizing: border-box; background: #3b4453; display: flex; align-items: center; justify-content: space-between; padding: 0 11px 0 3px; font-size: 16px; line-height: 34px; letter-spacing: -.6px; color: #dfe2e6; }
.btab span { margin-top: -1px; }
.add { margin-left: 10px; }
.find { margin-left: auto; margin-right: 1px; }
.menu { margin: -2px 9px 0 15px; }
.tree { flex: 1; font-size: 16px; letter-spacing: -.28px; color: #f0f1f3; }
.root { height: 31px; display: flex; align-items: center; }
.root svg { width: 24px; height: 24px; margin: -1px 4px 0 1px; }
.root span { letter-spacing: -.5px; }
.node { height: 30px; display: flex; align-items: center; }
.node .ic { width: 24px; height: 24px; }
.node span { margin-left: 5px; line-height: 30px; }
.stage { width: 1347px; display: flex; flex-direction: column; height: 760px; }
.scene { overflow: hidden; }
.edge { stroke: #363636; stroke-width: 1; }
.dull { --plus: #494e58; }
.dim { font-size: 18px; fill: #22b84a; letter-spacing: 0; }
.ax { font-size: 18px; letter-spacing: 0; }
.ax.x { fill: #e00d0d; }
.ax.y { fill: #10e010; }
.ax.z { fill: #1010d8; }
.vc { font-size: 10.500px; font-weight: 700; fill: #5b5f67; text-anchor: middle; letter-spacing: .2px; }
.docs { height: 36px; display: flex; align-items: center; background: #222932; }
.doc { height: 36px; box-sizing: border-box; display: flex; align-items: center; background: #464f61; color: #bcc2cc; }
.doc svg { color: #969dab; }
.d-home { width: 95px; padding-left: 8px; gap: 4px; }
.d-on { width: 115px; padding: 0 9px 0 13px; justify-content: space-between; background: #3b4453; color: #fff; border-bottom: 4px solid #36a9de; }
.d-asm { width: 169px; padding: 0 16px 0 12px; justify-content: space-between; }
.dmenu { margin: 0 5px 0 auto; }
.status { height: 33px; background: #2d323d; display: flex; align-items: stretch; line-height: 39px; }
.ready { flex: 1; }
.cell { border-left: 1px solid #c3c6cb; margin-top: 2px; line-height: 34px; box-sizing: border-box; }
.c1 { width: 40px; padding-left: 12px; }
.c3 { width: 36px; padding-left: 9px; }
</style>
